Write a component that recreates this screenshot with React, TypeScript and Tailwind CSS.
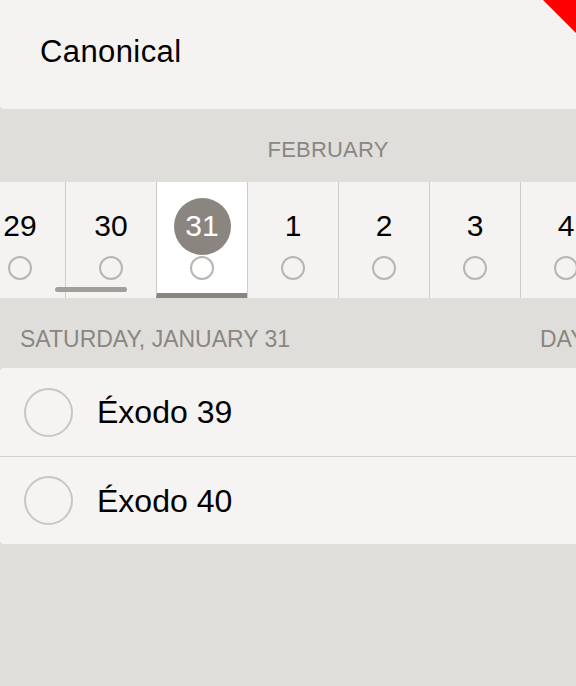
const days = [
  { n: 29 },
  { n: 30 },
  { n: 31, selected: true },
  { n: 1 },
  { n: 2 },
  { n: 3 },
  { n: 4 },
]

const readings = ['Éxodo 39', 'Éxodo 40']

export default function App() {
  return (
    <div className="w-[576px] h-[686px] overflow-hidden bg-[#dfdeda] font-['Liberation_Sans',Arial,sans-serif]">
      {/* header card */}
      <div className="relative h-[109px] bg-[#f4f3f1] rounded-bl-[4px] flex items-center pl-[40px] pb-[6px]">
        <span className="text-[31px] tracking-[0.4px] text-black leading-none">Canonical</span>
        <svg className="absolute top-0 right-0" width="33" height="33" viewBox="0 0 33 33">
          <polygon points="0,0 33,0 33,33" fill="#ff0000" />
        </svg>
      </div>

      {/* month label */}
      <div className="h-[73px] flex items-center justify-center pl-[80px] pt-[9px]">
        <span className="text-[22px] tracking-[0.2px] text-[#8b8681] leading-none">FEBRUARY</span>
      </div>

      {/* day strip */}
      <div className="relative h-[116px] overflow-hidden">
        <div className="flex h-full -ml-[26px]">
          {days.map((d, i) => (
            <div
              key={i}
              className={`w-[91px] shrink-0 h-full flex flex-col items-center border-l border-[#cfccc7] ${
                d.selected ? 'bg-white border-b-[5px] border-b-[#8a857f]' : 'bg-[#f4f3f1]'
              }`}
            >
              <div className="h-[74px] pt-[14px] flex items-center justify-center">
                {d.selected ? (
                  <div className="w-[57px] h-[57px] rounded-full bg-[#8a857f] flex items-center justify-center">
                    <span className="text-[30px] text-white leading-none">{d.n}</span>
                  </div>
                ) : (
                  <span className="text-[30px] text-black leading-none">{d.n}</span>
                )}
              </div>
              <div className="w-[24px] h-[24px] rounded-full border-2 border-[#b9b6b0]" />
            </div>
          ))}
        </div>
        {/* scroll indicator */}
        <div className="absolute left-[55px] top-[105px] w-[72px] h-[5px] rounded-full bg-[#a29f9b]" />
      </div>

      {/* section header */}
      <div className="h-[70px] flex items-center pt-[12px] overflow-hidden whitespace-nowrap">
        <span className="w-[540px] shrink-0 pl-[20px] text-[23px] text-[#8b8681] leading-none">
          SATURDAY, JANUARY 31
        </span>
        <span className="shrink-0 text-[23px] text-[#8b8681] leading-none">DAY 31</span>
      </div>

      {/* readings */}
      <div className="bg-[#f5f4f2] rounded-l-[4px]">
        {readings.map((r, i) => (
          <div
            key={r}
            className={`h-[88px] flex items-center pl-[24px] ${i > 0 ? 'border-t border-[#d3d0cb]' : ''}`}
          >
            <div className="w-[49px] h-[49px] rounded-full border-2 border-[#cac6c1] shrink-0" />
            <span className="ml-[24px] text-[32px] text-black leading-none">{r}</span>
          </div>
        ))}
      </div>
    </div>
  )
}
